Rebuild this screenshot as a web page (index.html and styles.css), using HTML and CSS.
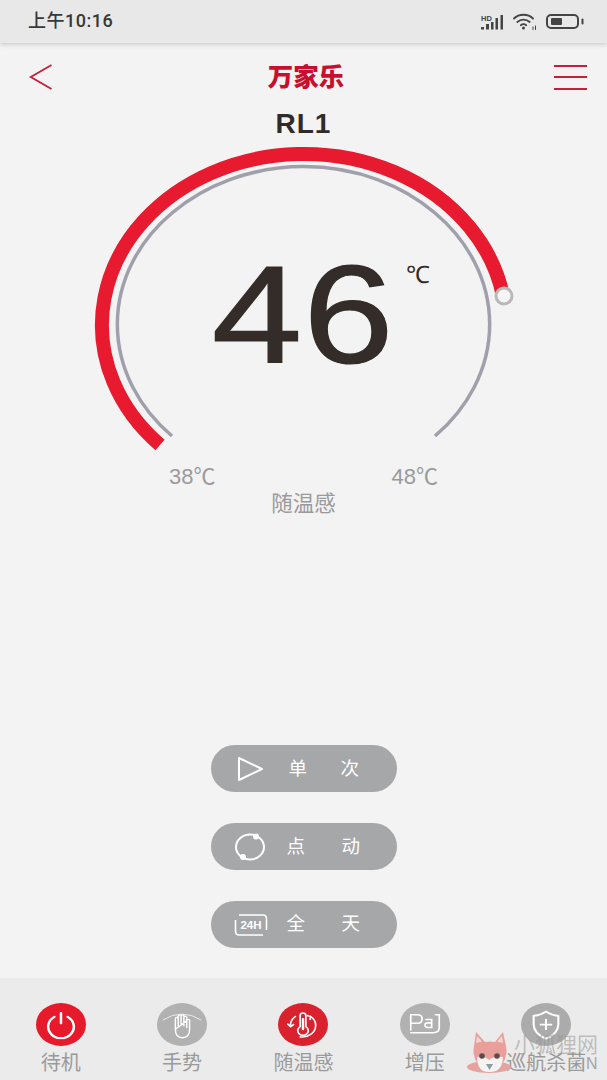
FILE: index.html
```html
<!DOCTYPE html>
<html lang="zh">
<head>
<meta charset="utf-8">
<title>万家乐</title>
<link rel="stylesheet" href="styles.css">
</head>
<body>
<div class="phone">
  <header class="status">
    <span class="time">上午10:16</span>
    <div class="status-icons">
      <svg class="sig" width="23" height="16" viewBox="0 0 23 16">
        <text x="0" y="6.500" class="hd">HD</text>
        <rect x="0" y="13" width="3" height="2.500" fill="#444"/>
        <rect x="5" y="10" width="3" height="5.500" fill="#444"/>
        <rect x="10" y="8" width="2.500" height="7.500" fill="#444"/>
        <rect x="14.500" y="4" width="2.500" height="11.500" fill="#444"/>
        <rect x="19.500" y="1" width="2.500" height="14.500" fill="#444"/>
      </svg>
      <svg class="wifi" width="24" height="17" viewBox="0 0 24 17" fill="none" stroke="#444" stroke-width="1.800" stroke-linecap="round">
        <path d="M1 5.500C6 .5 15 .5 20 5.500"/>
        <path d="M4.300 9C7.800 5.800 13.200 5.800 16.700 9"/>
        <path d="M7.800 12.200C9.500 10.900 11.500 10.900 13.200 12.200"/>
        <circle cx="10.500" cy="15" r="1.500" fill="#444" stroke="none"/>
        <path d="M20 14v2.500M22.500 13v3.500" stroke-width="1"/>
      </svg>
      <svg class="batt" width="38" height="15" viewBox="0 0 38 15">
        <rect x="1" y="1" width="31" height="13" rx="4" fill="none" stroke="#444" stroke-width="2"/>
        <rect x="5" y="4" width="11" height="7" rx="1" fill="#444"/>
        <path d="M36.500 5.500v4" stroke="#444" stroke-width="2" stroke-linecap="round"/>
      </svg>
    </div>
  </header>

  <nav class="topbar">
    <svg class="back" width="23" height="26" viewBox="0 0 23 26" fill="none" stroke="#c4203a" stroke-width="1.800"><path d="M22.500 1L1.800 13L22.500 25"/></svg>
    <span class="logo">万家乐</span>
    <div class="menu"><i></i><i></i><i></i></div>
  </nav>

  <main class="main">
    <h1 class="device">RL1</h1>
    <div class="gauge">
      <svg class="dial" width="607" height="340" viewBox="0 0 607 340" fill="none">
        <path d="M172 297A186 158 0 1 1 435 297" stroke="#a0a0ac" stroke-width="3.500"/>
        <path d="M160 306A202 171 0 1 1 503 157" stroke="#e71a2f" stroke-width="14"/>
        <circle cx="504" cy="157" r="8" fill="#f6f6f6" stroke="#b9b9b9" stroke-width="3"/>
      </svg>
      <div class="temp"><span class="temp-num">46</span></div>
      <div class="unit">℃</div>
      <div class="limits"><span>38℃</span><span>48℃</span></div>
      <div class="mode-name">随温感</div>
    </div>

    <div class="actions">
      <button class="pill">
        <svg class="pill-icon" width="28" height="26" viewBox="0 0 28 26" fill="none" stroke="#fff" stroke-width="2" stroke-linejoin="round"><path d="M3 2V24L26 13Z"/></svg>
        <span class="pill-a">单</span><span class="pill-b">次</span>
      </button>
      <button class="pill pill-wide">
        <svg class="pill-icon" width="32" height="28" viewBox="0 0 32 28" fill="none" stroke="#fff" stroke-width="2"><ellipse cx="16" cy="14" rx="14" ry="12.500"/><circle cx="22" cy="3.500" r="3" fill="#fff" stroke="none"/><circle cx="9" cy="24" r="3" fill="#fff" stroke="none"/></svg>
        <span class="pill-a">点</span><span class="pill-b">动</span>
      </button>
      <button class="pill pill-wider">
        <svg class="pill-icon" width="34" height="24" viewBox="0 0 34 24" fill="none" stroke="#fff" stroke-width="1.600"><path d="M5 2H29Q32.500 2 32.500 6V17M29 22H5Q1.500 22 1.500 18V7"/><text x="17" y="16.200" class="h24">24H</text></svg>
        <span class="pill-a">全</span><span class="pill-b">天</span>
      </button>
    </div>
  </main>

  <footer class="tabs">
    <div class="tab">
      <span class="disc disc-red">
        <svg width="34" height="34" viewBox="0 0 34 34" fill="none" stroke="#fff" stroke-width="2.600" stroke-linecap="round"><path d="M10 7.500A13.500 13.500 0 1 0 24 7.500"/><path d="M17 3V15"/></svg>
      </span>
      <span class="tab-label">待机</span>
    </div>
    <div class="tab">
      <span class="disc disc-grey">
        <svg width="44" height="38" viewBox="0 0 44 38" fill="none" stroke="#fff" stroke-width="1.500" stroke-linecap="round" stroke-linejoin="round"><path d="M2 13Q22 -1 42 13" stroke-width="1" opacity=".8"/><path d="M15 24V12Q15 10 16.500 10Q18 10 18 12V20M18 12V8.500Q18 7 19.500 7Q21 7 21 8.500V20M21 8.500Q21 7 22.500 7Q24 7 24 8.500V20M24 10Q24 8.500 25.500 8.500Q27 8.500 27 10V22M27 14Q27 12.500 28.500 12.500Q30 12.500 30 14V24Q30 34 22.500 34Q15 34 15 24Z"/></svg>
      </span>
      <span class="tab-label">手势</span>
    </div>
    <div class="tab">
      <span class="disc disc-red2">
        <svg width="36" height="36" viewBox="0 0 36 36" fill="none" stroke="#fff" stroke-width="1.800" stroke-linecap="round" stroke-linejoin="round"><path d="M15 7A3 3 0 0 1 21 7V20A5.500 5.500 0 1 1 15 20Z"/><path d="M18 11V23" stroke-width="2.600"/><path d="M10 8A13 13 0 0 0 5 20L2 17M5 20L8 17.500"/><path d="M26 8A13 13 0 0 1 26 29Q21 33 15 32"/><path d="M26 8L23 7M26 8L25.500 11.500"/></svg>
      </span>
      <span class="tab-label">随温感</span>
    </div>
    <div class="tab">
      <span class="disc disc-grey">
        <svg width="40" height="34" viewBox="0 0 40 34" fill="none" stroke="#fff" stroke-width="1.800" stroke-linecap="round"><path d="M5 23V5H12Q17 5 17 10Q17 15 12 15H5"/><path d="M21 10.500H27V20H23Q20 20 20 17Q20 14.500 23 14.500H27"/><path d="M31 5H35V20Q35 26 29 26H5"/></svg>
      </span>
      <span class="tab-label">增压</span>
    </div>
    <div class="tab">
      <span class="disc disc-grey2">
        <svg width="32" height="38" viewBox="0 0 32 38" fill="none" stroke="#fff" stroke-width="2.200" stroke-linejoin="round"><path d="M16 3Q23 8 29 8V18Q29 29 16 35Q3 29 3 18V8Q9 8 16 3Z"/><path d="M16 12V25M9.500 18.500H22.500"/></svg>
      </span>
      <span class="tab-label">巡航杀菌</span>
    </div>
  </footer>

  <div class="watermark">
    <svg class="fox" width="46" height="46" viewBox="0 0 46 46">
      <ellipse cx="23" cy="37" rx="22" ry="6" fill="#e6a29c"/>
      <path d="M8 16L10 2L19 12Q24 11 29 12L37 2L40 16Q42 24 37 33Q24 40 11 33Q6 24 8 16Z" fill="#e9a09a"/>
      <path d="M10 13L11 6L16 11.500ZM37 13L36 6L31 11.500Z" fill="#f3d6d1"/>
      <path d="M11 27Q18 25 23 30Q29 25 37 27Q37 37 30 41Q23 43 17 41Q11 37 11 27Z" fill="#f4f3f2"/>
      <circle cx="16" cy="26" r="2.800" fill="#5c4b4a"/>
      <circle cx="31" cy="26" r="2.800" fill="#5c4b4a"/>
      <path d="M20 34H27L23.500 40Z" fill="#8d9aa8"/>
    </svg>
    <span class="wm-text">小狐狸网</span>
    <span class="wm-cn">N</span>
  </div>
</div>
</body>
</html>
```

FILE: styles.css
```css
* { box-sizing: border-box; }
html, body { margin: 0; padding: 0; }
body { font-family: "Liberation Sans", "Noto Sans CJK SC", sans-serif; background: #f3f3f3; }
.phone { position: relative; width: 607px; height: 1080px; overflow: hidden; background: #f3f3f3; display: flex; flex-direction: column; }

.status { height: 43px; flex: none; background: #e8e8e8; display: flex; align-items: center; justify-content: space-between; padding: 0 23px 0 28px; box-shadow: 0 1px 5px rgba(0,0,0,.2); position: relative; }
.time { font-family: "Roboto", "Noto Sans CJK SC", sans-serif; font-size: 18px; line-height: 22px; margin-bottom: 2px; color: #383838; font-weight: 500; letter-spacing: .5px; }
.status-icons { display: flex; align-items: center; gap: 9px; }
.hd { font: 700 7.500px "Liberation Sans", sans-serif; fill: #444; }

.topbar { height: 66px; flex: none; display: flex; align-items: center; justify-content: space-between; padding: 2px 20px 0 29px; }
.logo { font-family: "Noto Sans CJK SC", sans-serif; font-weight: 900; font-size: 25.500px; line-height: 30px; color: #c8102e; margin: 0 0 5px 6px; }
.menu { display: flex; flex-direction: column; gap: 9.500px; width: 33px; }
.menu i { display: block; height: 2px; background: #c4203a; }

.main { flex: 1; display: flex; flex-direction: column; align-items: center; }
.device { margin: 0; font-family: "Liberation Sans", sans-serif; font-weight: 700; font-size: 28px; line-height: 30px; color: #2f2b2a; letter-spacing: 1px; }
.gauge { position: relative; width: 607px; height: 397px; }
.dial { position: absolute; left: 0; top: 0; }
.temp { position: absolute; left: 0; right: 0; top: 101px; text-align: center; font-family: "Liberation Sans", sans-serif; font-size: 139px; line-height: 150px; color: #332c29; }
.temp-num { display: inline-block; transform: scaleX(1.17); -webkit-text-stroke: 1.200px #332c29; letter-spacing: 1px; }
.unit { position: absolute; left: 406px; top: 122px; font-family: "Liberation Sans", sans-serif; font-size: 24px; line-height: 28px; color: #2f2b2a; }
.limits { position: absolute; left: 169px; width: 269px; top: 326px; display: flex; justify-content: space-between; font-size: 22px; line-height: 24px; color: #9a9a9c; }
.mode-name { position: absolute; left: 0; right: 0; top: 350px; text-align: center; font-family: "Noto Sans CJK SC", sans-serif; font-size: 21.500px; line-height: 26px; color: #9a9a9c; }

.actions { margin-top: 209px; display: flex; flex-direction: column; gap: 31px; }
.pill { position: relative; width: 186px; height: 47px; border: 0; padding: 0; border-radius: 24px; background: #a6a7a9; color: #fff; font-family: "Noto Sans CJK SC", sans-serif; font-size: 18.500px; }
.pill-icon { position: absolute; left: 25px; top: 50%; transform: translateY(-50%); }
.pill-wide .pill-icon { left: 23px; }
.pill-wider .pill-icon { left: 23px; }
.h24 { font: 700 11.500px "Liberation Sans", sans-serif; fill: #fff; stroke: none; text-anchor: middle; }
.pill-a { position: absolute; left: 78px; top: 9px; line-height: 27px; }
.pill-b { position: absolute; left: 130px; top: 9px; line-height: 27px; }
.pill-wide .pill-a { left: 76px; }
.pill-wide .pill-b { left: 131px; }
.pill-wider .pill-a { left: 76px; top: 8px; }
.pill-wider .pill-b { left: 131px; top: 8px; }

.tabs { height: 102px; flex: none; background: #ebebeb; display: grid; grid-template-columns: repeat(5, 121.400px); padding-top: 25px; }
.tab { display: flex; flex-direction: column; align-items: center; }
.disc { width: 50px; height: 43px; border-radius: 50%; display: flex; align-items: center; justify-content: center; }
.disc svg { transform: scale(.95, .85); }
.disc-red { background: #e71a2b; }
.disc-red2 { background: #d9222e; }
.disc-grey { background: #b1b1b1; }
.disc-grey2 { background: #ababab; }
.tab-label { font-family: "Noto Sans CJK SC", sans-serif; font-size: 20px; line-height: 26px; margin-top: 3px; color: #9a9a9a; white-space: nowrap; }

.watermark { position: absolute; left: 466px; top: 1030px; width: 141px; height: 50px; }
.fox { position: absolute; left: 0; top: 0; }
.wm-text { position: absolute; left: 48px; top: 0; font-family: "Noto Sans CJK SC", sans-serif; font-size: 21px; line-height: 26px; color: rgba(150,150,150,.55); white-space: nowrap; }
.wm-cn { position: absolute; left: 120px; top: 23px; font-size: 16px; line-height: 22px; color: #a5a5a5; }
```
